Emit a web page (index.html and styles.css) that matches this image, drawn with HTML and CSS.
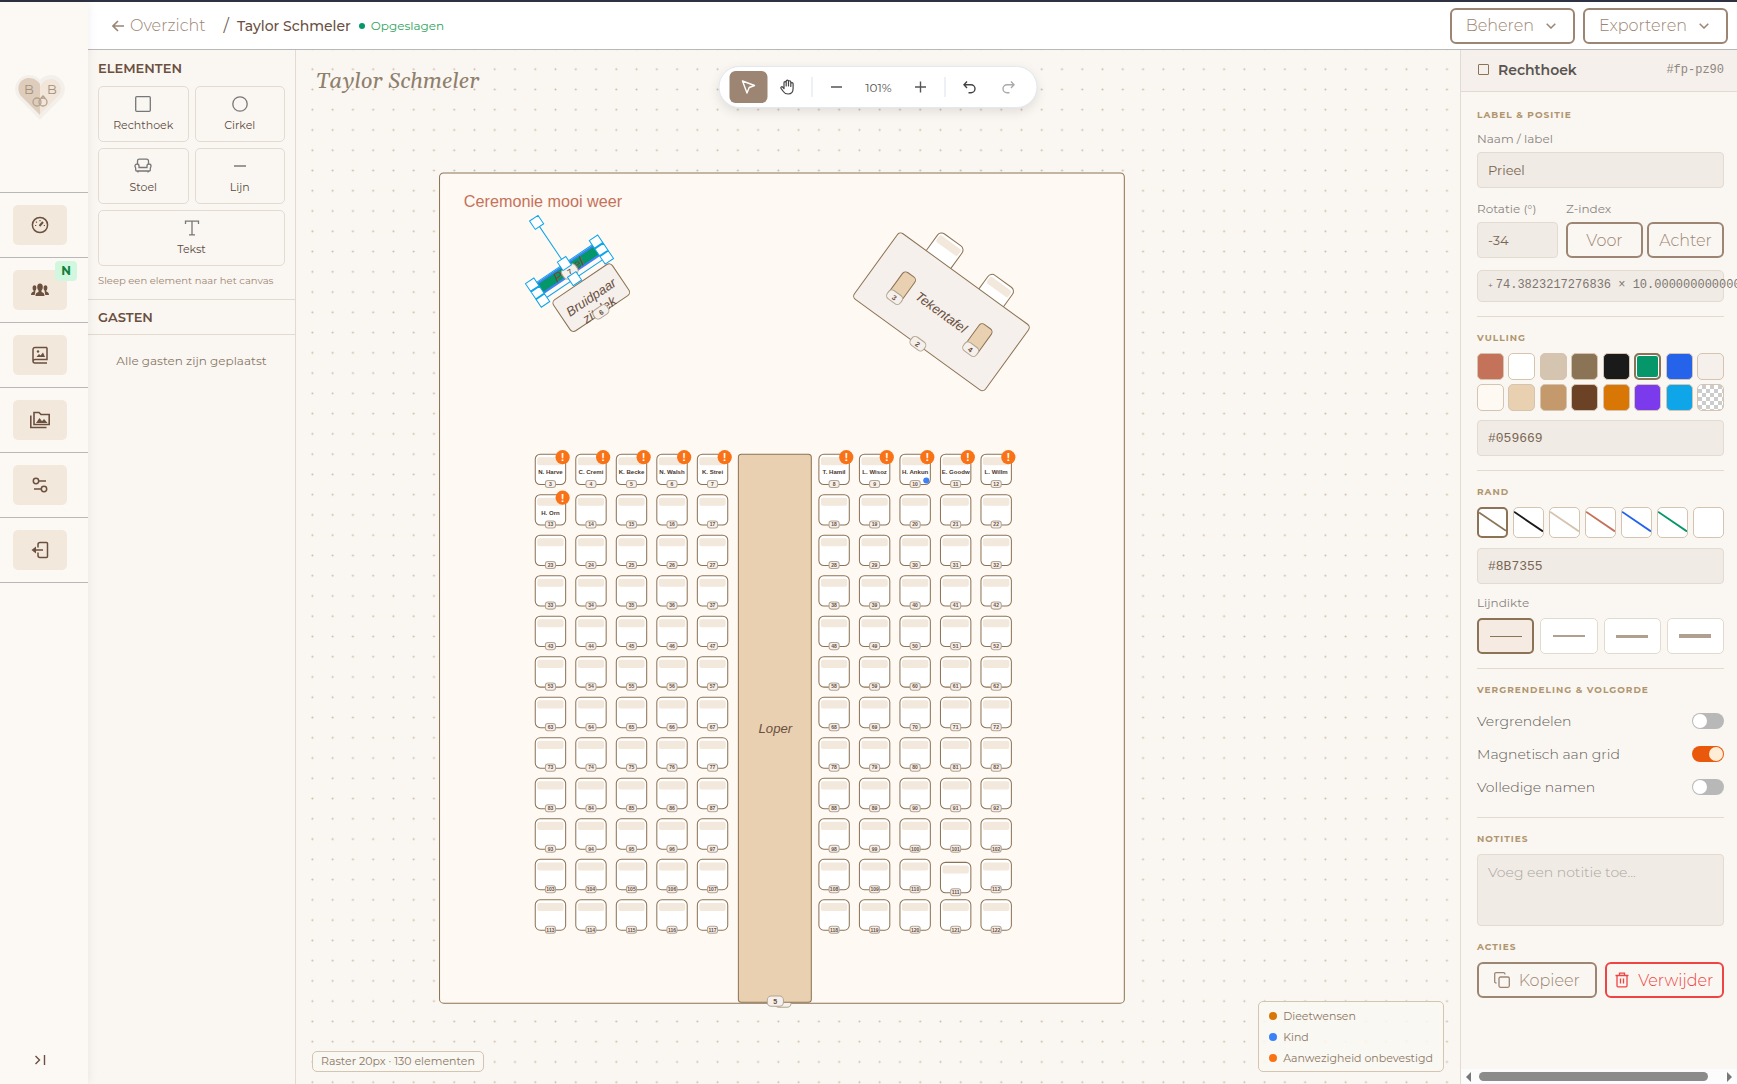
FILE: index.html
```html
<!DOCTYPE html>
<html lang="nl">
<head>
<meta charset="utf-8">
<meta name="viewport" content="width=device-width, initial-scale=1">
<title>Taylor Schmeler – plattegrond</title>
<link rel="stylesheet" href="styles.css">
</head>
<body>
<div class="app">
  <aside class="rail">
    <a class="logo" href="#" aria-label="Start">
      <svg width="50" height="46" viewBox="0 0 50 46">
        <path d="M25 43 5 23C-2 14 5 3 14 3c5 0 9 3 11 6 2-3 6-6 11-6 9 0 16 11 9 20z" fill="#f1e6d9" stroke="#f3f0ec" stroke-width="4"/>
        <path d="M25 41 6 22C0 14 5 4 14 4c5 0 9 3 11 6z" fill="#decdbb"/>
        <g fill="none" stroke="#b5a18e" stroke-width="1.3"><circle cx="22" cy="28" r="4"/><circle cx="28" cy="28" r="4"/><path d="m26 24 2-2 2 2"/></g>
        <text x="9" y="20" class="logo-letter">B</text><text x="32" y="20" class="logo-letter">B</text>
      </svg>
    </a>
    <nav class="rail-nav" aria-label="Hoofdmenu">
      <a href="#" aria-label="Dashboard"><span class="tile"><svg width="18" height="18" viewBox="0 0 18 18" fill="none" stroke="#6b4f3f" stroke-width="1.5"><circle cx="9" cy="9" r="7.6"/><path d="m8.5 10 3.5-4" stroke-width="2"/><path d="M4 9.500h1.200M5 5.700l.9.900M9 4v1.200M12.800 9.500H14" stroke-width="1.200"/></svg></span></a>
      <a href="#" aria-label="Gasten"><span class="tile"><svg width="18" height="14" viewBox="0 0 18 14" fill="#6b4f3f"><ellipse cx="9" cy="4" rx="2.800" ry="3.600"/><path d="M4.500 13c0-3 1.500-3.500 3-4V6h3v3c1.500.5 3 1 3 4z"/><ellipse cx="3.500" cy="5" rx="1.900" ry="2.800"/><ellipse cx="14.500" cy="5" rx="1.900" ry="2.800"/><path d="M0 12c0-2 1-3 2.700-3.500V7h1.600v2L3.700 12zM18 12c0-2-1-3-2.700-3.500V7h-1.600v2l.6 3z"/></svg></span><span class="badge">N</span></a>
      <a href="#" aria-label="Fotoboek"><span class="tile"><svg width="18" height="18" viewBox="0 0 18 18" fill="none" stroke="#6b4f3f" stroke-width="1.500"><path d="M16 1.500H4A2 2 0 0 0 2 3.500v11.500a2 2 0 0 0 2 2h12M16 1.500v12H4a2 2 0 0 0-2 1.500"/><path d="m5.500 11 2.500-3 1.500 1.500L12 6.500l2 4.500z" fill="#6b4f3f" stroke="none"/><circle cx="7" cy="5.500" r="1.200" fill="#6b4f3f" stroke="none"/></svg></span></a>
      <a href="#" aria-label="Media"><span class="tile"><svg width="22" height="18" viewBox="0 0 22 18" fill="none" stroke="#6b4f3f" stroke-width="1.600"><path d="M5 1.500h5l2 2h8.200v10H5zM1.800 4.500v12H17.500"/><path d="m7 12 3.500-5 2.500 3.200 2-2.200 3.500 4z" fill="#6b4f3f" stroke="none"/></svg></span></a>
      <a href="#" aria-label="Instellingen"><span class="tile"><svg width="18" height="18" viewBox="0 0 18 18" fill="none" stroke="#6b4f3f" stroke-width="1.500"><circle cx="5" cy="5" r="2.700"/><path d="M7.700 5H15M3 13h7.200"/><circle cx="13" cy="13" r="2.700"/></svg></span></a>
      <a href="#" aria-label="Uitloggen"><span class="tile"><svg width="20" height="18" viewBox="0 0 20 18" fill="none" stroke="#6b4f3f" stroke-width="1.500"><path d="M8 6.500V3.500a2 2 0 0 1 2-2h6.500a1 1 0 0 1 1 1v13a1 1 0 0 1-1 1H10a2 2 0 0 1-2-2v-3M4 9h9"/><path d="M6 5.500v7L1.500 9z" fill="#6b4f3f" stroke="none"/></svg></span></a>
    </nav>
    <button class="expand" type="button" aria-label="Menu uitklappen"><svg width="12" height="12" viewBox="0 0 12 12" fill="none" stroke="#6b4f3f" stroke-width="1.400"><path d="m1.500 2 4 4-4 4M10.500 1v10"/></svg></button>
  </aside>

  <div class="main">
    <header class="topbar">
      <a class="back" href="#"><svg width="12" height="12" viewBox="0 0 12 12" fill="none" stroke="currentColor" stroke-width="1.600"><path d="M12 6H1M6 1 1 6l5 5"/></svg>Overzicht</a>
      <span class="slash">/</span>
      <h1 class="doc-name">Taylor Schmeler</h1>
      <span class="saved">Opgeslagen</span>
      <div class="top-actions">
        <button class="btn" type="button">Beheren <svg width="10" height="6" viewBox="0 0 10 6" fill="none" stroke="currentColor" stroke-width="1.500"><path d="m.7.700 4.300 4.300L9.300.7"/></svg></button>
        <button class="btn" type="button">Exporteren <svg width="10" height="6" viewBox="0 0 10 6" fill="none" stroke="currentColor" stroke-width="1.500"><path d="m.7.700 4.300 4.300L9.300.7"/></svg></button>
      </div>
    </header>

    <div class="workspace">
      <aside class="palette">
        <section class="elements">
          <h2>ELEMENTEN</h2>
          <div class="element-grid">
            <button type="button"><svg width="16" height="16" viewBox="0 0 16 16" fill="none" stroke="#777" stroke-width="1.300"><rect x=".7" y=".7" width="14.600" height="14.600" rx="1"/></svg>Rechthoek</button>
            <button type="button"><svg width="16" height="16" viewBox="0 0 16 16" fill="none" stroke="#777" stroke-width="1.300"><circle cx="8" cy="8" r="7.200"/></svg>Cirkel</button>
            <button type="button"><svg width="18" height="16" viewBox="0 0 18 16" fill="none" stroke="#777" stroke-width="1.300"><path d="M3.500 6V3a1.800 1.800 0 0 1 1.800-1.800h7.400A1.800 1.800 0 0 1 14.500 3v3M5 9.500V8a2 2 0 0 0-4 0c0 1 .7 1.500.7 2.500V12a1 1 0 0 0 1 1h12.600a1 1 0 0 0 1-1v-1.500c0-1 .7-1.500.7-2.500a2 2 0 0 0-4 0v1.500zM4 13v1.500M14 13v1.500"/></svg>Stoel</button>
            <button type="button"><svg width="16" height="16" viewBox="0 0 16 16" stroke="#999" stroke-width="2"><path d="M2 8h12"/></svg>Lijn</button>
            <button class="wide" type="button"><svg width="16" height="16" viewBox="0 0 16 16" fill="none" stroke="#777" stroke-width="1.300"><path d="M1.500 4V1.200h13V4M8 1.200v13.600M5 14.800h6"/></svg>Tekst</button>
          </div>
          <p class="hint">Sleep een element naar het canvas</p>
        </section>
        <section class="guests">
          <h2>GASTEN</h2>
          <p>Alle gasten zijn geplaatst</p>
        </section>
      </aside>

      <main class="stage">
        <svg class="plan" role="img" aria-label="Plattegrond">
          <defs>
            <pattern id="dots" x="-10" y="-10" width="20" height="20" patternUnits="userSpaceOnUse"><circle cx="10" cy="10" r="1" fill="#cdbba4"/></pattern>
          </defs>
          <g transform="translate(16.400 19.200) scale(1.013)">
            <rect x="-16" y="-19" width="100%" height="100%" fill="url(#dots)"/>
            <rect x="125.500" y="102.500" width="676" height="819.500" rx="4" fill="#fff8f3" stroke="#8b7355"/>
            <rect x="456.500" y="915" width="16" height="11" rx="4" class="tag"/>
            <text x="149.500" y="136" class="room-label">Ceremonie mooi weer</text>
            <rect x="420.500" y="380" width="72" height="541" rx="3" class="runner"/>
            <text x="457" y="655" class="label">Loper</text>
            <g transform="translate(457 920)"><rect x="-8" y="-5" width="16" height="10" rx="4" class="tag"/><text y="3" class="tag-text">5</text></g>
            <g id="chairs"></g>

            <g transform="translate(623.300 180.700) rotate(36)"><rect x="-15" y="-15" width="30" height="30" rx="5" class="seat"/><rect x="-13" y="-12" width="26" height="8" rx="2" class="seat-back"/></g>
            <g transform="translate(673.100 221.500) rotate(36)"><rect x="-15" y="-15" width="30" height="30" rx="5" class="seat"/><rect x="-13" y="-12" width="26" height="8" rx="2" class="seat-back"/></g>
            <g transform="translate(621 239.500) rotate(36)"><rect x="-80" y="-40" width="160" height="80" rx="4" class="table"/><text y="5" class="label">Tekentafel</text></g>
            <g transform="translate(582 215.100) rotate(36)"><rect x="-7.500" y="-15" width="15" height="30" rx="4" class="runner"/></g>
            <g transform="translate(657.600 266.300) rotate(36)"><rect x="-7.500" y="-15" width="15" height="30" rx="4" class="runner"/></g>
            <g transform="translate(574.700 225.100) rotate(36)"><rect x="-8" y="-5" width="16" height="10" rx="4" class="tag"/><text y="3" class="tag-text">3</text></g>
            <g transform="translate(649.800 276.400) rotate(36)"><rect x="-8" y="-5" width="16" height="10" rx="4" class="tag"/><text y="3" class="tag-text">4</text></g>
            <g transform="translate(597.700 271) rotate(36)"><rect x="-8" y="-5" width="16" height="10" rx="4" class="tag"/><text y="3" class="tag-text">2</text></g>

            <g transform="translate(275.300 225.500) rotate(-34)"><rect x="-35" y="-18.500" width="70" height="37" rx="4" class="table"/><text y="4" class="label">Bruidpaar</text><text y="19" class="label">zitplek</text><g transform="translate(0 17)"><rect x="-8" y="-5" width="16" height="10" rx="4" class="tag"/><text y="3" class="tag-text">6</text></g></g>

            <g transform="translate(253.800 199.300) rotate(-34)">
              <rect x="-37" y="-7.500" width="74" height="11" fill="#059669" stroke="#3b82f6" stroke-width="2"/>
              <text y="3" class="label faded">Prieel</text>
              <rect x="-8" y="-5" width="16" height="11" rx="4" class="tag"/><text y="3" class="tag-text">7</text>
              <g fill="#fff" stroke="#0ea5e9"><path d="M0-9v-49M-38-9h76V9h-76z" fill="none"/>
              <path d="M-5-63H5v10H-5zM-43-14h10v10h-10zM-43-5h10V5h-10zM-43 4h10v10h-10zM33-14h10v10H33zM33-5h10V5H33zM33 4h10v10H33zM-5-14H5v10H-5zM-5 4H5v10H-5z"/></g>
            </g>
          </g>
        </svg>

        <p class="watermark">Taylor Schmeler</p>

        <div class="toolbar" role="toolbar" aria-label="Canvasgereedschap">
          <button class="active" type="button" aria-label="Selecteren"><svg width="16" height="16" viewBox="0 0 16 16" fill="none" stroke="#fff" stroke-width="1.400" stroke-linejoin="round"><path d="m2 2 12 4.500-5.300 2L6.500 14z"/></svg></button>
          <button type="button" aria-label="Verschuiven"><svg width="16" height="16" viewBox="0 0 16 16" fill="none" stroke="#444" stroke-width="1.200" stroke-linecap="round" stroke-linejoin="round"><path d="M4.500 8.500V3.700a1.100 1.100 0 0 1 2.200 0V7M6.700 7V2.300a1.100 1.100 0 0 1 2.300 0V7M9 7V2.900a1.100 1.100 0 0 1 2.300 0v4.600M11.300 7.500V4.700a1.100 1.100 0 0 1 2.300 0V9.500c0 3.500-2 5.500-5 5.500-2.300 0-3.700-.8-4.800-2.500L1.500 9.300c-.7-1.100.9-2.100 1.700-1.200l1.300 1.600V8"/></svg></button>
          <span class="sep"></span>
          <button type="button" aria-label="Uitzoomen"><svg width="12" height="12" viewBox="0 0 12 12" stroke="#555" stroke-width="1.400"><path d="M.5 6h11"/></svg></button>
          <output class="zoom">101%</output>
          <button type="button" aria-label="Inzoomen"><svg width="12" height="12" viewBox="0 0 12 12" stroke="#555" stroke-width="1.400"><path d="M.5 6h11M6 .5v11"/></svg></button>
          <span class="sep"></span>
          <button type="button" aria-label="Ongedaan maken"><svg width="14" height="14" viewBox="0 0 14 14" fill="none" stroke="#444" stroke-width="1.400"><path d="M4.500 1.500 1.500 4.700l3 3.200M1.500 4.700h7a4 4 0 0 1 0 8H6"/></svg></button>
          <button type="button" aria-label="Opnieuw" disabled><svg width="14" height="14" viewBox="0 0 14 14" fill="none" stroke="#aaa" stroke-width="1.400"><path d="m9.500 1.500 3 3.200-3 3.200M12.500 4.700h-7a4 4 0 0 0 0 8H8"/></svg></button>
        </div>

        <p class="status">Raster 20px · 130 elementen</p>
        <ul class="legend">
          <li><span class="dot diet"></span>Dieetwensen</li>
          <li><span class="dot child"></span>Kind</li>
          <li><span class="dot pending"></span>Aanwezigheid onbevestigd</li>
        </ul>
      </main>

      <aside class="inspector">
        <header class="inspector-head"><span class="shape"></span><h2>Rechthoek</h2><code>#fp-pz90</code></header>
        <form class="inspector-body">
          <section>
            <h3>LABEL &amp; POSITIE</h3>
            <label class="field-label" for="name">Naam / label</label>
            <input class="field" id="name" type="text" value="Prieel">
            <div class="pos-row">
              <div class="rotation"><label class="field-label" for="rot">Rotatie (°)</label><input class="field" id="rot" type="text" value="-34"></div>
              <div class="zindex"><span class="field-label">Z-index</span><div class="pair"><button class="btn" type="button">Voor</button><button class="btn" type="button">Achter</button></div></div>
            </div>
            <div class="dims"><span class="plus">+</span>74.3823217276836 × 10.000000000000002</div>
          </section>
          <section>
            <h3>VULLING</h3>
            <div class="swatches">
              <button type="button" class="c1" aria-label="Terracotta"></button><button type="button" class="c2" aria-label="Wit"></button><button type="button" class="c3" aria-label="Zand"></button><button type="button" class="c4" aria-label="Olijf"></button><button type="button" class="c5" aria-label="Zwart"></button><button type="button" class="c6 chosen" aria-label="Groen"></button><button type="button" class="c7" aria-label="Blauw"></button><button type="button" class="c8" aria-label="Parel"></button>
              <button type="button" class="c9" aria-label="Ivoor"></button><button type="button" class="c10" aria-label="Beige"></button><button type="button" class="c11" aria-label="Karamel"></button><button type="button" class="c12" aria-label="Bruin"></button><button type="button" class="c13" aria-label="Oranje"></button><button type="button" class="c14" aria-label="Paars"></button><button type="button" class="c15" aria-label="Hemelsblauw"></button><button type="button" class="c16" aria-label="Transparant"></button>
            </div>
            <input class="field mono" type="text" value="#059669" aria-label="Vulkleur">
          </section>
          <section class="border-section">
            <h3>RAND</h3>
            <div class="strokes">
              <button type="button" class="chosen" aria-label="Olijf"><svg viewBox="0 0 31 31" stroke="#8b7355"><path d="m0 4 31 21"/></svg></button>
              <button type="button" aria-label="Zwart"><svg viewBox="0 0 31 31" stroke="#1a1a1a"><path d="m0 4 31 21"/></svg></button>
              <button type="button" aria-label="Zand"><svg viewBox="0 0 31 31" stroke="#d4c4b0"><path d="m0 4 31 21"/></svg></button>
              <button type="button" aria-label="Terracotta"><svg viewBox="0 0 31 31" stroke="#c4725a"><path d="m0 4 31 21"/></svg></button>
              <button type="button" aria-label="Blauw"><svg viewBox="0 0 31 31" stroke="#2563eb"><path d="m0 4 31 21"/></svg></button>
              <button type="button" aria-label="Groen"><svg viewBox="0 0 31 31" stroke="#059669"><path d="m0 4 31 21"/></svg></button>
              <button type="button" aria-label="Geen"></button>
            </div>
            <input class="field mono" type="text" value="#8B7355" aria-label="Randkleur">
            <span class="field-label">Lijndikte</span>
            <div class="widths">
              <button type="button" class="w1 chosen" aria-label="1 px"><i></i></button><button type="button" class="w2" aria-label="2 px"><i></i></button><button type="button" class="w3" aria-label="3 px"><i></i></button><button type="button" class="w4" aria-label="4 px"><i></i></button>
            </div>
          </section>
          <section class="toggles">
            <h3>VERGRENDELING &amp; VOLGORDE</h3>
            <label>Vergrendelen<input type="checkbox"></label>
            <label>Magnetisch aan grid<input type="checkbox" checked></label>
            <label>Volledige namen<input type="checkbox"></label>
          </section>
          <section>
            <h3><label for="notes">NOTITIES</label></h3>
            <textarea class="field notes" id="notes" placeholder="Voeg een notitie toe..."></textarea>
            <h3 class="actions-title">ACTIES</h3>
            <div class="actions">
              <button class="btn" type="button"><svg width="16" height="16" viewBox="0 0 16 16" fill="none" stroke="currentColor" stroke-width="1.300"><rect x="5" y="5" width="10.300" height="10.300" rx="1.500"/><path d="M2.500 11C1.200 11 .7 10.500.7 9.500V2.200C.7 1.200 1.200.7 2.200.7h7.300c1 0 1.500.5 1.500 1.800"/></svg>Kopieer</button>
              <button class="btn danger" type="button"><svg width="14" height="16" viewBox="0 0 14 16" fill="none" stroke="currentColor" stroke-width="1.300"><path d="M.5 3.500h13M4.500 3.500V1.200h5v2.300M2 3.500v10.300a1 1 0 0 0 1 1h8a1 1 0 0 0 1-1V3.500M5.500 6.500v5M8.500 6.500v5"/></svg>Verwijder</button>
            </div>
          </section>
        </form>
        <div class="scroll" aria-hidden="true"><span class="arrow left"></span><span class="thumb"></span><span class="arrow right"></span></div>
      </aside>
    </div>
  </div>
</div>
<script src="chairs.js"></script>
</body>
</html>
```
FILE: styles.css
```css
* { box-sizing: border-box; }
body { margin: 0; font-family: Montserrat, Inter, "Open Sans", sans-serif; font-size: 12px; color: #6b5b4f; }
h1, h2, h3, p, ul { margin: 0; padding: 0; }
ul { list-style: none; }
button, input, textarea { font: inherit; color: inherit; margin: 0; }
button { padding: 0; cursor: pointer; }
a { color: inherit; text-decoration: none; }
svg { display: block; flex: none; }

.app { display: flex; height: 100vh; min-height: 1084px; border-top: 2px solid #2d3142; background: #faf7f2; }

/* Left icon rail */
.rail { position: relative; z-index: 2; flex: 0 0 88px; display: flex; flex-direction: column; background: #fcf9f4; box-shadow: 0 0 10px rgba(0, 0, 0, .08); }
.logo { height: 190px; padding: 72px 0 0 15px; }
.logo-letter { font-size: 13px; fill: #a39080; }
.rail-nav { border-top: 1px solid #b8b8b8; }
.rail-nav a { position: relative; display: flex; height: 65px; padding: 12px 13px; border-bottom: 1px solid #b8b8b8; }
.tile { display: flex; align-items: center; justify-content: center; width: 54px; height: 40px; border-radius: 5px; background: #f2e8dc; }
.badge { position: absolute; left: 55px; top: 3px; width: 22px; height: 20px; border-radius: 4px; background: #d1f7df; color: #15803d; font-weight: 700; line-height: 20px; text-align: center; }
.expand { margin: auto auto 18px 34px; border: 0; background: none; }

/* Header */
.main { flex: 1; min-width: 0; display: flex; flex-direction: column; }
.topbar { display: flex; align-items: center; height: 48px; padding: 0 9px 0 24px; background: #fff; border-bottom: 1px solid #b8b8b8; }
.back { display: flex; align-items: center; gap: 6px; font-size: 16px; font-weight: 300; color: #9c8572; }
.slash { margin: 0 8px 0 18px; font-size: 16px; }
.doc-name { font-size: 14px; font-weight: 500; color: #6b4f3f; }
.saved { display: flex; align-items: center; gap: 6px; margin-left: 8px; color: #2fa35b; }
.saved::before { content: ""; width: 6px; height: 6px; border-radius: 50%; background: #059669; }
.top-actions { display: flex; gap: 8px; margin-left: auto; }
.btn { display: flex; align-items: center; justify-content: center; height: 36px; border: 2px solid #9c8572; border-radius: 6px; background: none; color: #9c8572; font-size: 16px; font-weight: 300; }
.top-actions .btn { gap: 12px; padding: 0 17px 0 14px; }

.workspace { flex: 1; min-height: 0; display: grid; grid-template-columns: 208px minmax(0, 1fr) 277px; }

/* Element palette */
.palette { border-right: 1px solid #e4dbd0; }
.palette h2 { font-size: 13px; line-height: 16px; font-weight: 600; color: #6b4f3f; }
.elements { padding: 10px 10px 10px; border-bottom: 1px solid #e4dbd0; }
.element-grid { display: grid; grid-template-columns: 1fr 1fr; gap: 6px; margin: 10px 0 7px; }
.element-grid button { display: flex; flex-direction: column; align-items: center; justify-content: center; gap: 6px; height: 56px; border: 1px solid #e4dbd0; border-radius: 5px; background: none; font-size: 11px; line-height: 15px; color: #5c4a3e; }
.element-grid .wide { grid-column: 1 / 3; }
.hint { font-size: 10px; line-height: 16px; color: #9c8572; }
.guests h2 { padding: 9px 10px; border-bottom: 1px solid #e4dbd0; }
.guests p { margin-top: 18px; line-height: 16px; text-align: center; color: #8a7768; }

/* Canvas */
.stage { position: relative; overflow: hidden; }
.plan { position: absolute; inset: 0; width: 100%; height: 100%; font-family: "Liberation Sans", Arial, sans-serif; }
.room-label { font-size: 16px; fill: #c4725a; }
.label { font-size: 13px; font-style: italic; fill: #6b4f3f; text-anchor: middle; }
.faded { fill: #7a4a3a; }
.seat { fill: #fff; stroke: #8b7355; }
.seat-back { fill: #f2e8dc; }
.table { fill: #f5f0eb; stroke: #8b7355; }
.runner { fill: #e8d0b0; stroke: #8b7355; }
.tag { fill: #f5f0eb; stroke: #b3a594; }
.tag-text { font-size: 7px; font-weight: 700; fill: #6b4f3f; text-anchor: middle; }
.seat-no { font-size: 5px; font-weight: 700; fill: #6b4f3f; text-anchor: middle; }
.guest { font-size: 6px; font-weight: 700; fill: #4a372c; text-anchor: middle; }
.alert { font-size: 11px; font-weight: 700; fill: #fff; text-anchor: middle; }
.watermark { position: absolute; left: 20px; top: 18px; font: italic 22px/28px Georgia, Gelasio, "Liberation Serif", serif; color: #8f7f6c; }
.toolbar { position: absolute; top: 16px; left: 50%; transform: translateX(-50%); display: flex; align-items: center; gap: 1px; height: 42px; padding: 0 9px 0 10px; border: 1px solid #e2e8f0; border-radius: 21px; background: #fff; box-shadow: 0 4px 12px rgba(0, 0, 0, .1); }
.toolbar button { display: flex; align-items: center; justify-content: center; width: 38px; height: 32px; border: 0; border-radius: 6px; background: none; }
.toolbar .active { background: #9c8572; }
.sep { width: 1px; height: 20px; margin: 0 4px; background: #dbe4ee; }
.zoom { width: 44px; text-align: center; color: #555; }
.status, .legend { position: absolute; bottom: 12px; border: 1px solid #d4c4b0; border-radius: 5px; background: rgba(250, 247, 242, .9); font-size: 11px; color: #8b7766; }
.status { left: 16px; padding: 0 8px; line-height: 19px; }
.legend { right: 16px; display: grid; gap: 5px; padding: 6px 10px 5px; }
.legend li { display: flex; align-items: center; gap: 6px; line-height: 16px; }
.dot { width: 8px; height: 8px; border-radius: 50%; }
.diet { background: #d97706; }
.child { background: #3b82f6; }
.pending { background: #f97316; }

/* Inspector */
.inspector { display: flex; flex-direction: column; min-width: 0; overflow: hidden; border-left: 1px solid #e4dbd0; }
.inspector-head { display: flex; align-items: center; gap: 9px; height: 42px; padding: 0 13px 2px 17px; border-bottom: 1px solid #e4dbd0; background: #f5f0eb; }
.inspector-head h2 { font-size: 14px; font-weight: 600; color: #5a5450; }
.inspector-head code { margin-left: auto; font: 12px "Liberation Mono", monospace; color: #8f8780; }
.shape { width: 11px; height: 11px; border: 1px solid #8b7355; border-radius: 1px; }
.inspector-body { flex: 1; padding: 0 13px 0 16px; }
.inspector-body section { padding: 13px 0 14px; border-bottom: 1px solid #e4dbd0; }
.inspector-body section:first-child { padding-top: 15px; }
.inspector-body section:last-child { border: 0; }
.inspector-body h3 { margin-bottom: 7px; font-size: 9px; line-height: 16px; font-weight: 700; letter-spacing: 1px; color: #b0956f; }
.inspector-body section:first-child h3 { margin-bottom: 8px; }
.inspector-body .toggles h3 { margin-bottom: 6px; }
.field-label { display: block; margin-bottom: 5px; line-height: 16px; color: #8a8580; }
.field { display: block; width: 100%; height: 36px; padding: 0 10px; border: 1px solid #e4dbd0; border-radius: 4px; background: #f0ebe5; color: #7a6553; font-size: 13px; }
.pos-row { display: grid; grid-template-columns: 81px 1fr; gap: 8px; margin: 13px 0 12px; }
.pair { display: grid; grid-template-columns: 1fr 1fr; gap: 4px; }
.dims { height: 32px; padding: 0 10px; border: 1px solid #e4dbd0; border-radius: 5px; background: #f0ebe5; font: 12px/28px "Liberation Mono", monospace; white-space: nowrap; color: #7d7670; }
.plus { margin-right: 3px; font-size: 8px; }
.mono { font-family: "Liberation Mono", monospace; }
.swatches { display: grid; grid-template-columns: repeat(8, 27px); justify-content: space-between; gap: 4px 0; margin-bottom: 9px; }
.swatches button { height: 27px; border: 1px solid #d4c4b0; border-radius: 5px; }
.swatches .chosen { border: 2px solid #8b7355; box-shadow: inset 0 0 0 1px #fff; }
.c1 { background: #c4725a; } .c2 { background: #fff; } .c3 { background: #d4c4b0; } .c4 { background: #8b7355; }
.c5 { background: #1a1a1a; } .c6 { background: #059669; } .c7 { background: #2563eb; } .c8 { background: #f5f0eb; }
.c9 { background: #fff8f3; } .c10 { background: #e8d0b0; } .c11 { background: #c49a6c; } .c12 { background: #6b4226; }
.c13 { background: #d97706; } .c14 { background: #7c3aed; } .c15 { background: #0ea5e9; }
.c16 { background: #fff repeating-conic-gradient(#ccc 0 25%, #fff 0 50%) 0 0 / 8px 8px; }
.strokes { display: grid; grid-template-columns: repeat(7, 31px); justify-content: space-between; margin-bottom: 10px; }
.strokes button { position: relative; height: 31px; border: 1px solid #d4c4b0; border-radius: 5px; background: #fff; overflow: hidden; }
.strokes svg { position: absolute; inset: 0; width: 100%; height: 100%; stroke-width: 2; }
.strokes .chosen { border: 2px solid #8b7355; }
.border-section .field-label { margin-top: 11px; margin-bottom: 7px; }
.widths { display: grid; grid-template-columns: repeat(4, 1fr); gap: 6px; }
.widths button { display: flex; align-items: center; justify-content: center; height: 36px; border: 1px solid #e4dbd0; border-radius: 5px; background: #fff; }
.widths .chosen { border: 2px solid #8b7355; background: #f5ebe3; }
.widths i { width: 32px; background: #b0a08f; }
.widths .chosen i { background: #8b7355; }
.w1 i { height: 1px; } .w2 i { height: 2px; } .w3 i { height: 3px; } .w4 i { height: 4px; }
.toggles label { display: flex; align-items: center; justify-content: space-between; height: 33px; font-size: 14px; font-weight: 300; color: #5f5a56; }
.toggles input { appearance: none; width: 32px; height: 16px; padding: 1px; border-radius: 8px; background: #b8b8b8; }
.toggles input::before { content: ""; display: block; width: 14px; height: 14px; border-radius: 50%; background: #fff; }
.toggles input:checked { padding-left: 17px; background: #ea580c; }
.toggles input:checked::before { background: #ffedd5; }
.notes { height: 72px; padding: 8px 10px; font-size: 14px; font-weight: 300; resize: none; }
.notes::placeholder { color: #aca6a0; }
.inspector-body .actions-title { margin-top: 13px; }
.actions { display: grid; grid-template-columns: 1fr 1fr; gap: 8px; }
.actions .btn { gap: 9px; }
.btn.danger { border-color: #ef4444; color: #ef4444; }
.scroll { display: flex; align-items: center; gap: 8px; height: 15px; padding: 0 5px; background: #fcfcfc; }
.thumb { flex: 1; height: 9px; margin-right: 11px; border-radius: 5px; background: #8b8b8b; }
.arrow { border: 5px solid transparent; }
.left { border-left: 0; border-right-color: #777; }
.right { border-right: 0; border-left-color: #777; }
```
FILE: chairs.js
```js
// Draws the ceremony seating: twelve rows, five chairs on each side of the aisle.
const guests = {
  3: 'N. Harve', 4: 'C. Cremi', 5: 'K. Becke', 6: 'N. Walsh', 7: 'K. Strei',
  8: 'T. Hamil', 9: 'L. Wisoz', 10: 'H. Ankun', 11: 'E. Goodw', 12: 'L. Willm', 13: 'H. Orn'
};
const columns = [220, 260, 300, 340, 380, 500, 540, 580, 620, 660];
const children = [10];
const moved = { 111: 3 };
let markup = '';
let overlays = '';
for (let row = 0; row < 12; row++) {
  columns.forEach((x, i) => {
    const no = 3 + row * 10 + i;
    const at = `<g transform="translate(${x} ${380 + row * 40 + (moved[no] || 0)})">`;
    markup += at + '<rect width="30" height="30" rx="5" class="seat"/>' +
      '<rect x="2" y="3" width="26" height="8" rx="2" class="seat-back"/>' +
      '<rect x="10" y="26" width="10" height="7" rx="2.5" class="tag"/>' +
      `<text x="15" y="31.300" class="seat-no">${no}</text>`;
    if (guests[no]) markup += `<text x="15" y="20" class="guest">${guests[no]}</text>`;
    markup += '</g>';
    if (guests[no]) {
      overlays += at + '<circle cx="27" cy="3" r="7" fill="#f97316"/><text x="27" y="7" class="alert">!</text>';
      if (children.includes(no)) overlays += '<circle cx="26" cy="26" r="3" fill="#3b82f6"/>';
      overlays += '</g>';
    }
  });
}
document.getElementById('chairs').innerHTML = markup + overlays;
```
